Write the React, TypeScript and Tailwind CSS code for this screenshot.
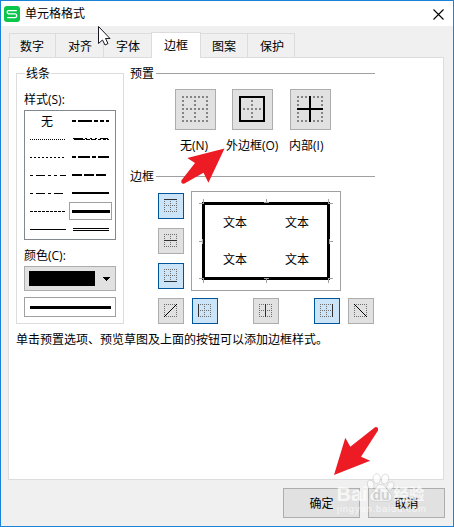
import React from "react";

type Seg = [number, number];

const tabs = [
  { label: "数字", cls: "w-[46px] pl-[10px]" },
  { label: "对齐", cls: "w-[48px] pl-[12px]" },
  { label: "字体", cls: "w-[48px] pl-[12px]" },
  { label: "边框", active: true, cls: "w-[50px] pl-[12px]" },
  { label: "图案", cls: "w-[46px] pl-[11px]" },
  { label: "保护", cls: "w-[48px] pl-[12px]" },
];

function Line({ segs, thick = 1 }: { segs: Seg[]; thick?: number }) {
  return (
    <svg width="38" height={thick} shapeRendering="crispEdges" className="block">
      {segs.map(([x, w], i) => (
        <rect key={i} x={x} y={0} width={w} height={thick} fill="#000" />
      ))}
    </svg>
  );
}

const repeat = (on: number, pitch: number, total: number): Seg[] =>
  Array.from({ length: Math.ceil(total / pitch) }, (_, i) => [i * pitch, on] as Seg);

function Slanted() {
  return (
    <svg width="38" height="2" shapeRendering="crispEdges" className="block">
      <path d="M1 .5H11M13 .5H15M18 .5H20M23 .5H25M28 .5H36M2 1.5H13M14 1.5H18M19 1.5H24M26 1.5H29M31 1.5H34M35 1.5H37" stroke="#000" />
    </svg>
  );
}

const leftLines: React.ReactNode[] = [
  <span className="pl-[11px] pt-[2px]">无</span>,
  <Line segs={repeat(1, 2, 36)} />,
  <Line segs={repeat(2, 4, 34)} />,
  <Line segs={[[0, 3], [6, 9], [18, 3], [24, 3], [30, 6]]} />,
  <Line segs={[[0, 3], [6, 9], [18, 3], [24, 9]]} />,
  <Line segs={repeat(3, 4, 36)} />,
  <Line segs={[[0, 36]]} />,
];

const rightLines: React.ReactNode[] = [
  <Line thick={2} segs={[[0, 4], [6, 14], [22, 4], [28, 4], [34, 3]]} />,
  <Slanted />,
  <Line thick={2} segs={[[0, 4], [6, 12], [20, 4], [26, 11]]} />,
  <Line thick={2} segs={[[0, 10], [12, 10], [24, 10]]} />,
  <Line thick={2} segs={[[0, 37]]} />,
  <Line thick={3} segs={[[0, 38]]} />,
  <svg width="38" height="3" shapeRendering="crispEdges" className="block">
    <path d="M1 .5H37M1 2.5H37" stroke="#000" />
  </svg>,
];

function Dots({ unit, inset = false }: { unit: number; inset?: boolean }) {
  const dots: React.ReactNode[] = [];
  for (let r = 0; r < 7; r++)
    for (let c = 0; c < 7; c++) {
      const edge = r % 6 === 0 || c % 6 === 0;
      if ((r % 3 === 0 || c % 3 === 0) && !(inset && edge))
        dots.push(
          <rect key={`${r}-${c}`} x={c * 2 * unit} y={r * 2 * unit} width={unit} height={unit} fill={unit === 2 ? "#848484" : "#6e6e6e"} />
        );
    }
  return <>{dots}</>;
}

function Preset({ kind }: { kind: "none" | "outer" | "inner" }) {
  return (
    <button className="flex h-[41px] w-[41px] shrink-0 border border-[#adadad] bg-[#e1e1e1] pl-[6px] pt-[6px]">
      <svg width="26" height="26" shapeRendering="crispEdges" className="block">
        <Dots unit={2} inset={kind === "outer"} />
        {kind === "outer" && <rect x="1" y="1" width="24" height="24" fill="none" stroke="#000" strokeWidth="2" />}
        {kind === "inner" && <path d="M13 0V26M0 13H26" stroke="#000" strokeWidth="2" />}
      </svg>
    </button>
  );
}

function Side({ d, on, diag }: { d: string; on?: boolean; diag?: boolean }) {
  return (
    <button
      className={
        "flex h-[26px] w-[26px] shrink-0 border pl-[5px] pt-[5px] " +
        (on ? "border-[#005499] bg-[#cce4f7]" : "border-[#adadad] bg-[#e1e1e1]")
      }
    >
      <svg width="13" height="13" shapeRendering="crispEdges" className="block">
        {diag ? (
          <path d="M.5 0V13M12.5 0V13M0 .5H13M0 12.5H13" stroke="#6e6e6e" strokeDasharray="1 1" />
        ) : (
          <Dots unit={1} />
        )}
        <path d={d} stroke={diag ? "#000" : "#303030"} />
      </svg>
    </button>
  );
}

function Heading({ children }: { children: React.ReactNode }) {
  return (
    <div className="flex h-[16px] items-center">
      <span className="w-[26px] shrink-0 pt-[2px] leading-[16px]">{children}</span>
      <span className="h-px flex-1 bg-[#a0a0a0]" />
    </div>
  );
}

export default function App() {
  return (
    <div className="relative flex h-[527px] w-[454px] flex-col overflow-hidden border border-[#1a82d7] bg-[#f0f0f0] text-[12px] leading-[16px] text-black [font-family:'Open_Sans','Noto_Sans_CJK_SC',sans-serif]">
      <header className="flex h-[25px] shrink-0 items-center bg-white pl-[3px] pr-[10px]">
        <svg width="16" height="16" viewBox="0 0 16 16" className="mt-px">
          <rect width="16" height="16" rx="3" fill="#0ac64b" />
          <path d="M12.8 4.6H4.5Q3.2 4.6 3.2 6T4.5 7.9H11.3Q12.7 7.9 12.7 9.7T11.3 11.6H3.2" fill="none" stroke="#fff" strokeWidth="1.4" />
        </svg>
        <span className="ml-[5px] mt-px">单元格格式</span>
        <svg width="11" height="11" viewBox="0 0 11 11" className="ml-auto mt-px -mr-[1px]">
          <path d="M.5 .5L10.5 10.5M10.5 .5L.5 10.5" stroke="#000" strokeWidth="1.1" />
        </svg>
      </header>

      <nav className="mt-[6px] flex h-[25px] shrink-0 items-end pl-[8px]">
        {tabs.map((t) => (
          <div
            key={t.label}
            className={
              "flex shrink-0 items-center border-t border-l border-[#dcdcdc] last:border-r " +
              t.cls +
              (t.active ? " z-10 -mb-px h-[26px] border-r bg-white" : " h-[24px] pt-[3px]") +
              (t.label === "图案" ? " border-l-0" : "")
            }
          >
            {t.label}
          </div>
        ))}
      </nav>

      <main className="ml-[7px] flex h-[423px] w-[436px] shrink-0 flex-col border border-[#dcdcdc] bg-white pl-[7px] pt-[7px]">
        <div className="flex h-[259px]">
          <fieldset className="h-[259px] w-[108px] shrink-0 border border-[#dcdcdc] pl-[7px]">
            <legend className="ml-[1px] h-[16px] px-[1px] leading-[18px]">线条</legend>
            <div className="mt-[10px] h-[19px] leading-[18px]">样式(S):</div>
            <div className="flex h-[130px] w-[92px] border border-[#828790] pt-px">
              <div className="flex w-[44px] flex-col pl-[5px]">
                {leftLines.map((l, i) => (
                  <div key={i} className="flex h-[18px] items-center">{l}</div>
                ))}
              </div>
              <div className="flex w-[43px] flex-col">
                {rightLines.map((l, i) => (
                  <div
                    key={i}
                    className={"flex h-[18px] items-center " + (i === 5 ? "border border-[#a0a0a0] pl-[2px]" : "pl-[3px]")}
                  >
                    {l}
                  </div>
                ))}
              </div>
            </div>
            <div className="mt-[7px] h-[19px] leading-[18px]">颜色(C):</div>
            <div className="flex h-[25px] w-[92px] items-center border border-[#adadad] bg-[#e1e1e1] pl-[4px]">
              <span className="h-[15px] w-[66px] bg-black" />
              <svg width="7" height="4" className="ml-[8px]" shapeRendering="crispEdges">
                <path d="M0 0H7L3.5 4Z" />
              </svg>
            </div>
            <div className="mt-[6px] flex h-[20px] w-[92px] items-center border border-[#a0a0a0] pl-[5px] pt-px">
              <span className="h-[3px] w-[81px] bg-black" />
            </div>
          </fieldset>

          <section className="ml-[6px] w-[245px]">
            <Heading>预置</Heading>
            <div className="mt-[8px] flex pl-[45px]">
              <Preset kind="none" />
              <span className="w-[16px]" />
              <Preset kind="outer" />
              <span className="w-[17px]" />
              <Preset kind="inner" />
            </div>
            <div className="mt-[8px] flex h-[16px] whitespace-nowrap pl-[50px]">
              <span className="w-[46px]">无(N)</span>
              <span className="w-[63px]">外边框(O)</span>
              <span>内部(I)</span>
            </div>
            <div className="mt-[14px]">
              <Heading>边框</Heading>
            </div>
            <div className="mt-[7px] flex h-[100px] pl-[28px]">
              <div className="flex w-[33px] flex-col gap-[9px] pt-[2px]">
                <Side on d="M0 .5H13" />
                <Side d="M0 6.5H13" />
                <Side on d="M0 12.5H13" />
              </div>
              <div className="relative h-[100px] w-[150px] border border-[#a0a0a0] pl-[10px] pt-[10px]">
                <div className="grid h-[78px] w-[128px] grid-cols-2 grid-rows-2 border-[3px] border-black">
                  {["pl-[18px] pt-[10px]", "pl-[19px] pt-[10px]", "pl-[18px] pt-[11px]", "pl-[19px] pt-[11px]"].map((c, i) => (
                    <span key={i} className={c}>文本</span>
                  ))}
                </div>
                <svg width="148" height="98" className="absolute left-0 top-0" shapeRendering="crispEdges">
                  <path
                    d="M7 11.5H12M11.5 7V11M74.5 7V11M72 10.5H77M136.5 7V12M136 11.5H141M7 49.5H11M10.5 47V52M137 49.5H141M137.5 47V52M7 86.5H12M11.5 87V91M74.5 87V91M72 86.5H77M136.5 86V91M136 86.5H141"
                    stroke="#a0a0a0"
                  />
                </svg>
              </div>
            </div>
            <div className="mt-[7px] flex pl-[28px]">
              <Side diag d="M0 13L13 0" />
              <span className="w-[8px]" />
              <Side on d="M.5 0V13" />
              <span className="w-[35px]" />
              <Side d="M6.5 0V13" />
              <span className="w-[35px]" />
              <Side on d="M12.5 0V13" />
              <span className="w-[8px]" />
              <Side diag d="M0 0L13 13" />
            </div>
          </section>
        </div>
        <p className="mt-[8px] whitespace-nowrap">单击预置选项、预览草图及上面的按钮可以添加边框样式。</p>
      </main>

      <footer className="mt-[8px] flex gap-[8px] pl-[282px]">
        <button className="h-[30px] w-[77px] border border-[#adadad] bg-[#e1e1e1] pt-px">确定</button>
        <button className="h-[30px] w-[77px] border border-[#adadad] bg-[#e1e1e1] pt-px">取消</button>
      </footer>

      <svg width="454" height="527" className="pointer-events-none absolute -left-px -top-px z-20">
        <g fill="#ed1c24">
          <path d="M224.5 148.5L187.3 158L195 163L181.3 180.5Q180.8 184 184 183.8L203.5 172.8L208.4 182.8Z" />
          <path d="M334 475L345.3 437.7L350.3 446.8L375 427.2Q378.6 426.6 378 430.5L361 456.7L370.2 460.8Z" />
        </g>
        <path d="M98.5 26.5V43.5L102.5 40L105 45L108 43.5L105.5 38.5H110Z" fill="#fff" stroke="#171725" />
        <g fill="#fff" opacity=".72">
          <text x="336.5" y="500.5" fontSize="20" fontWeight="700" textLength="31" fontFamily="Liberation Sans, sans-serif">Bai</text>
          <g stroke="#b8b8b8" strokeWidth=".6">
            <ellipse cx="370.7" cy="484.5" rx="3.2" ry="4.5" transform="rotate(-15 370.7 484.5)" />
            <ellipse cx="376.7" cy="478.5" rx="3.6" ry="5" />
            <ellipse cx="385" cy="479" rx="3.6" ry="5" transform="rotate(12 385 479)" />
            <ellipse cx="390.3" cy="486" rx="3.2" ry="4.5" transform="rotate(25 390.3 486)" />
            <path d="M380.5 484.5C375.5 484.5 376 490 372 492.5C367.5 496 370 502 376 501.3H386C392 502 394 496 389 492C385.5 489 386 484.5 380.5 484.5Z" />
          </g>
          <text x="393.5" y="499.5" fontSize="15.5" fontWeight="700" fontFamily="Noto Sans CJK SC, sans-serif">经验</text>
          <text x="337" y="512" fontSize="9.5" textLength="89" fontFamily="Liberation Sans, sans-serif">jingyan.baidu.com</text>
        </g>
        <text x="372.5" y="499.5" fontSize="14" fontWeight="700" fill="#cfcfcf" fontFamily="Liberation Sans, sans-serif">du</text>
      </svg>
    </div>
  );
}
